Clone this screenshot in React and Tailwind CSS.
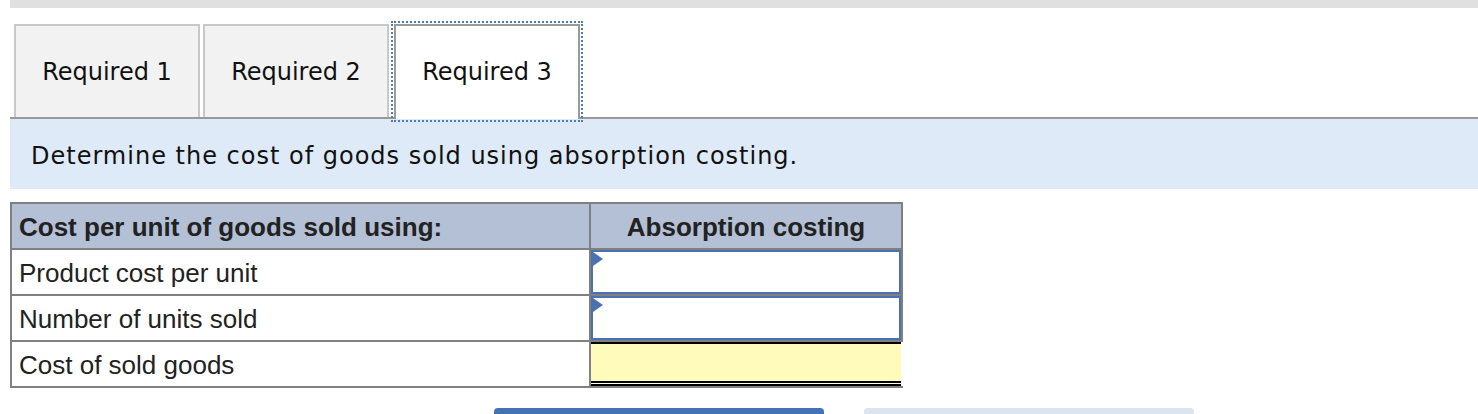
import React from 'react';

const Tab = ({ label, active }) => {
    if (active) {
        return (
            <div className="ml-[2px] -mb-[2px] w-[186px] h-[95px] bg-white border-2 border-b-0 border-[#9a9a9a] outline-2 outline-dotted outline-[#4a7bc4] outline-offset-[1px] flex items-center justify-center pb-[2px] text-[24px] text-[#111]">
                {label}
            </div>
        );
    }
    return (
        <div className="mr-[3px] w-[186px] h-[93px] bg-[#f2f2f2] border-2 border-b-0 border-[#c8c8c8] flex items-center justify-center text-[24px] text-[#111]">
            {label}
        </div>
    );
};

const InputCell = () => (
    <div className="relative h-[44px] border-2 border-[#4a72b0] bg-white">
        <span className="absolute left-0 top-0 w-0 h-0 border-y-[7px] border-y-transparent border-l-[10px] border-l-[#4a72b0]" />
    </div>
);

const App = () => {
    const rows = ['Product cost per unit', 'Number of units sold'];

    return (
        <div className="w-[1478px] h-[414px] overflow-hidden bg-white pl-[10px] font-['DejaVu_Sans',sans-serif]">
            <div className="h-[8px] bg-[#e0e0e0]" />

            {/* Tabs */}
            <div className="h-[111px] flex items-end pl-[4px] border-b-2 border-[#999]">
                <Tab label="Required 1" />
                <Tab label="Required 2" />
                <Tab label="Required 3" active />
            </div>

            <div className="h-[70px] bg-[#deeaf7] flex items-center pl-[21px] pt-[3px] text-[24px] tracking-[1px] text-[#111]">
                Determine the cost of goods sold using absorption costing.
            </div>

            {/* Table */}
            <table className="mt-[13px] w-[893px] border-collapse border-2 border-[#808080] font-['Liberation_Sans',Arial,sans-serif] text-[26px] text-[#222]">
                <thead>
                    <tr className="bg-[#b4c0d6]">
                        <th className="w-[579px] h-[46px] border-2 border-[#808080] px-[7px] pt-[2px] text-left font-bold">Cost per unit of goods sold using:</th>
                        <th className="h-[46px] border-2 border-[#808080] px-[7px] pt-[2px] text-center font-bold">Absorption costing</th>
                    </tr>
                </thead>
                <tbody>
                    {rows.map((r) => (
                        <tr key={r}>
                            <td className="h-[46px] border-2 border-[#808080] px-[7px] pt-[2px]">{r}</td>
                            <td className="h-[46px] border-2 border-[#808080] p-0">
                                <InputCell />
                            </td>
                        </tr>
                    ))}
                    <tr>
                        <td className="h-[46px] border-2 border-[#808080] px-[7px] pt-[2px]">Cost of sold goods</td>
                        <td className="h-[46px] border-2 border-l-[#808080] border-y-[#808080] border-r-transparent p-0 align-top">
                            <div className="h-[39px] bg-[#fffcbb] border-t-2 border-black" />
                            <div className="h-[5px] border-y-2 border-black bg-white" />
                        </td>
                    </tr>
                </tbody>
            </table>

            {/* Buttons */}
            <div className="mt-[20px] ml-[484px] flex gap-[40px]">
                <div className="w-[330px] h-[40px] rounded-[4px] bg-[#4472b5]" />
                <div className="w-[330px] h-[40px] rounded-[4px] bg-[#dbe4ef]" />
            </div>
        </div>
    );
};

export default App;
